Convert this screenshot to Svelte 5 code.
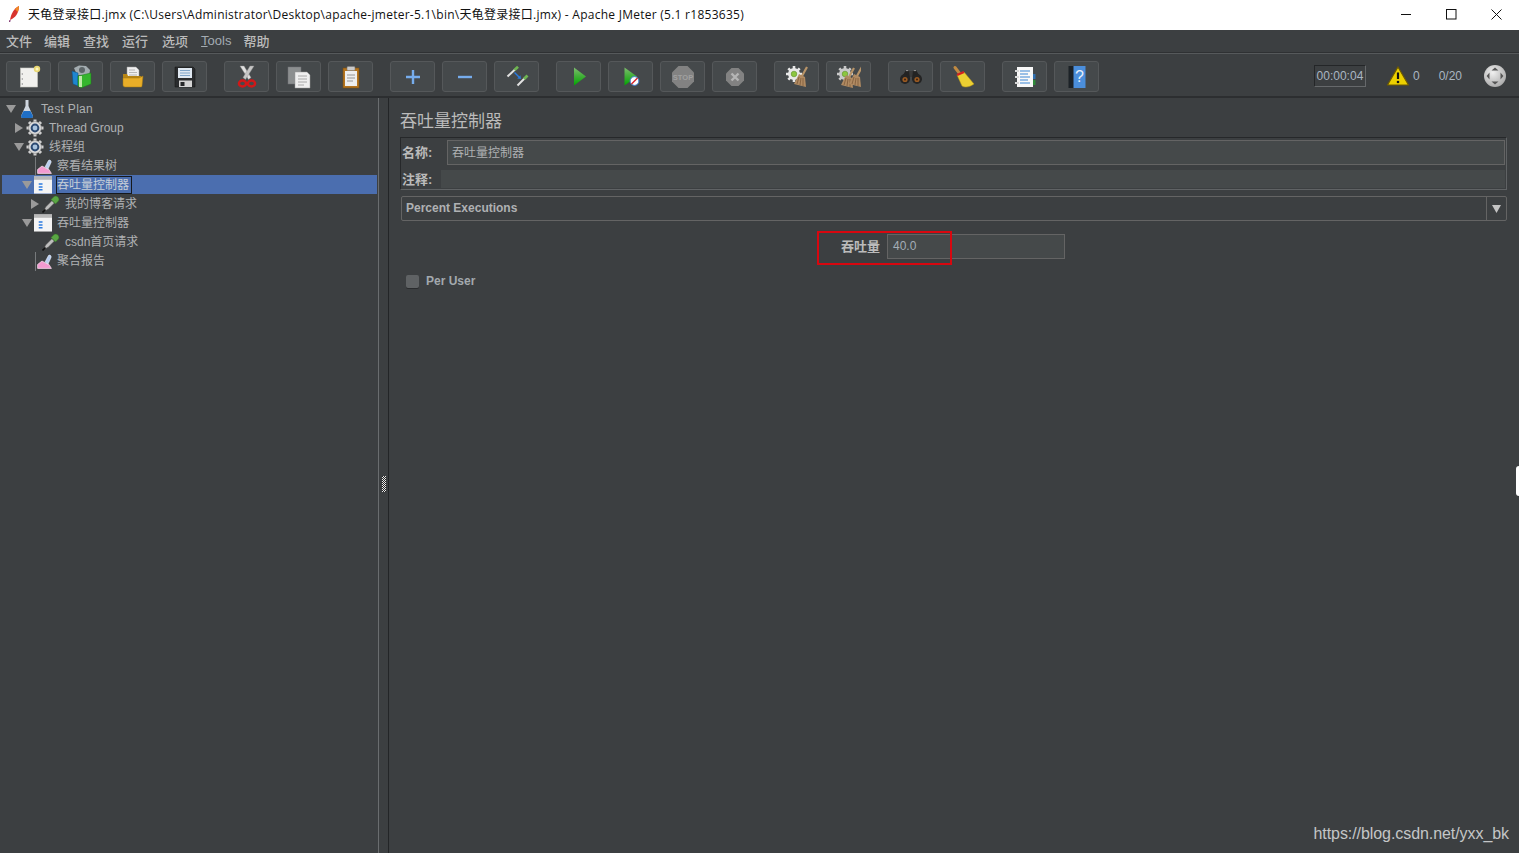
<script>
	const menus = [
		{ label: '文件' },
		{ label: '编辑' },
		{ label: '查找' },
		{ label: '运行' },
		{ label: '选项' },
		{ label: 'Tools', latin: true },
		{ label: '帮助' }
	];

	const treeRows = [
		{ level: 0, toggle: 'open', icon: 'flask', label: 'Test Plan', latin: true },
		{ level: 1, toggle: 'closed', icon: 'gear', label: 'Thread Group' },
		{ level: 1, toggle: 'open', icon: 'gear', label: '线程组' },
		{ level: 2, icon: 'chart', label: '察看结果树' },
		{ level: 2, toggle: 'open', icon: 'logic', label: '吞吐量控制器', selected: true },
		{ level: 3, toggle: 'closed', icon: 'pipette', label: '我的博客请求' },
		{ level: 2, toggle: 'open', icon: 'logic', label: '吞吐量控制器' },
		{ level: 3, icon: 'pipette', label: 'csdn首页请求' },
		{ level: 2, icon: 'chart', label: '聚合报告' }
	];
</script>

{#snippet broom(x, y, s = 1)}
	<g transform="translate({x} {y}) scale({s})">
		<path d="M14 0 L9 9" stroke="#b89468" stroke-width="2.2" />
		<path d="M6 7 L12 10 L13 20 L1 17 Z" fill="#b08a62" />
		<path d="M6 10 L4 17 M8 11 L7 18 M10 11 L10 19" stroke="#7d5a3a" stroke-width=".8" />
	</g>
{/snippet}

{#snippet smallGear(x, y, bright = '#e8e8e8')}
	<g transform="translate({x} {y})">
		<path d="M8 0v16M0 8h16M2.3 2.3l11.4 11.4M13.7 2.3L2.3 13.7" stroke={bright} stroke-width="2.6" />
		<circle cx="8" cy="8" r="6" fill={bright} />
		<circle cx="8" cy="8" r="2.8" fill="#8cc63f" stroke="#5d8f2a" stroke-width=".6" />
	</g>
{/snippet}

{#snippet newIcon()}
	<svg width="24" height="24" viewBox="0 0 24 24">
		<rect x="3.5" y="3" width="17" height="19" fill="#f1f1ee" stroke="#c8c8c4" stroke-width=".6" />
		<circle cx="5.3" cy="9" r=".7" fill="#888" />
		<circle cx="5.3" cy="14" r=".7" fill="#888" />
		<circle cx="5.3" cy="19" r=".7" fill="#888" />
		<circle cx="20" cy="4" r="3.2" fill="#e9d873" />
		<circle cx="20" cy="4" r="1.5" fill="#fff6bf" />
	</svg>
{/snippet}

{#snippet templatesIcon()}
	<svg width="24" height="24" viewBox="0 0 24 24">
		<path d="M5 3 L10 0.5 L17 1 L21 5 L20 12 L8 10 Z" fill="#a3acb0" />
		<circle cx="13" cy="5" r="3" fill="#5d6568" />
		<path d="M3 6 L9 8 V21 L4 19 Z" fill="#1f86d0" stroke="#0d4f80" stroke-width=".5" />
		<path d="M9 11 L22 8 V19 L12 23 L9 21 Z" fill="#35b52e" stroke="#1d7a1a" stroke-width=".5" />
		<path d="M10 11 h3 v11 h-3 Z" fill="#bfe9a8" />
	</svg>
{/snippet}

{#snippet openIcon()}
	<svg width="24" height="24" viewBox="0 0 24 24">
		<path d="M6 2 H15 L18 5 V14 H6 Z" fill="#efefef" stroke="#9a9a9a" stroke-width=".5" />
		<path d="M8 5h6M8 7.5h8M8 10h8" stroke="#a8a8a8" stroke-width=".8" />
		<path d="M2 9 H6 L7 11 H20 V13 H2 Z" fill="#b78514" />
		<path d="M2 13 H18 L22 11 L21 21 C21 22 20 22 19 22 H4 C3 22 2 21 2 20 Z" fill="#e9ae28" stroke="#a67a12" stroke-width=".5" />
	</svg>
{/snippet}

{#snippet saveIcon()}
	<svg width="24" height="24" viewBox="0 0 24 24">
		<path d="M2 2 H20 L22 4 V22 H2 Z" fill="#2a2c2e" stroke="#111" stroke-width=".5" />
		<rect x="5" y="3" width="14" height="10" fill="#dfe8f1" />
		<path d="M7 5.5h10M7 8h10M7 10.5h10" stroke="#7fa4c8" stroke-width="1" />
		<rect x="6" y="15.5" width="13" height="6.5" fill="#d4d4d4" />
		<rect x="7.5" y="17" width="4" height="4" fill="#26282a" />
	</svg>
{/snippet}

{#snippet cutIcon()}
	<svg width="24" height="24" viewBox="0 0 24 24">
		<path d="M5 1 L13.5 14.5 L16 12.6 L9 1 Z" fill="#e0e0e0" stroke="#8a8a8a" stroke-width=".4" />
		<path d="M19 1 L10.5 14.5 L8 12.6 L15 1 Z" fill="#c6c6c6" stroke="#8a8a8a" stroke-width=".4" />
		<ellipse cx="7.5" cy="18.5" rx="3.6" ry="3" fill="none" stroke="#d01818" stroke-width="2.4" />
		<ellipse cx="16.5" cy="18.5" rx="3.6" ry="3" fill="none" stroke="#d01818" stroke-width="2.4" />
	</svg>
{/snippet}

{#snippet copyIcon()}
	<svg width="24" height="24" viewBox="0 0 24 24">
		<rect x="1" y="2" width="13" height="17" fill="#8c8f90" stroke="#6f7273" stroke-width=".5" />
		<path d="M8 7 H20 L23 10 V23 H8 Z" fill="#efefef" stroke="#9a9a9a" stroke-width=".5" />
		<path d="M11 11h9M11 14h9M11 17h9M11 20h6" stroke="#a0a0a0" stroke-width=".9" />
	</svg>
{/snippet}

{#snippet pasteIcon()}
	<svg width="24" height="24" viewBox="0 0 24 24">
		<rect x="4" y="3" width="16" height="20" fill="#b4741e" stroke="#7a4e12" stroke-width=".6" />
		<rect x="6" y="6" width="12" height="15" fill="#eeeeee" />
		<path d="M8 10h8M8 13h8M8 16h6" stroke="#8a8a8a" stroke-width=".9" />
		<rect x="8" y="1.5" width="8" height="4" rx="1" fill="#c9c9c9" stroke="#777" stroke-width=".5" />
	</svg>
{/snippet}

{#snippet plusIcon()}
	<svg width="24" height="24" viewBox="0 0 24 24">
		<path d="M12 5 V19 M5 12 H19" stroke="#76acec" stroke-width="2.4" />
	</svg>
{/snippet}

{#snippet minusIcon()}
	<svg width="24" height="24" viewBox="0 0 24 24">
		<path d="M5 12 H19" stroke="#76acec" stroke-width="2.4" />
	</svg>
{/snippet}

{#snippet toggleIcon()}
	<svg width="24" height="24" viewBox="0 0 24 24">
		<path d="M2.5 11.5 L10 4.5" stroke="#e2e2e2" stroke-width="2" />
		<path d="M9.5 5 L13 1.8" stroke="#6fb552" stroke-width="2.8" />
		<path d="M12.5 20.5 L19.5 13.5" stroke="#e2e2e2" stroke-width="2" />
		<path d="M19 14 L22.5 10.6" stroke="#6fb552" stroke-width="2.8" />
		<path d="M9.5 7.5 L14 12" stroke="#2a7be0" stroke-width="1.4" />
		<path d="M16 14 L12.2 13.4 L15.4 10.2 Z" fill="#2a7be0" />
	</svg>
{/snippet}

{#snippet startIcon()}
	<svg width="24" height="24" viewBox="0 0 24 24">
		<defs>
			<linearGradient id="play" x1="0" y1="0" x2="0" y2="1">
				<stop offset="0" stop-color="#7dbd6e" />
				<stop offset=".5" stop-color="#3fae36" />
				<stop offset="1" stop-color="#00a800" />
			</linearGradient>
		</defs>
		<path d="M7 2.5 L19 11.5 L7 20.5 Z" fill="url(#play)" />
	</svg>
{/snippet}

{#snippet startNoPauseIcon()}
	<svg width="24" height="24" viewBox="0 0 24 24">
		<path d="M5.5 2.5 L18 11.5 L5.5 20.5 Z" fill="url(#play)" />
		<circle cx="15.5" cy="16" r="4.4" fill="#fff" stroke="#3a7bd0" stroke-width="1" />
		<path d="M12.5 19 L18.5 13" stroke="#d8242a" stroke-width="1.5" />
	</svg>
{/snippet}

{#snippet stopIcon()}
	<svg width="24" height="24" viewBox="0 0 24 24">
		<path d="M7.5 1 H16.5 L23 7.5 V16.5 L16.5 23 H7.5 L1 16.5 V7.5 Z" fill="#828282" />
		<text x="12" y="15" class="stop-text">STOP</text>
	</svg>
{/snippet}

{#snippet shutdownIcon()}
	<svg width="24" height="24" viewBox="0 0 24 24">
		<path d="M8.5 3 H15.5 L21 8.5 V15.5 L15.5 21 H8.5 L3 15.5 V8.5 Z" fill="#828282" />
		<path d="M8.5 8.5 L15.5 15.5 M15.5 8.5 L8.5 15.5" stroke="#b5b5b5" stroke-width="2.4" />
	</svg>
{/snippet}

{#snippet clearIcon()}
	<svg width="24" height="24" viewBox="0 0 24 24">
		{@render smallGear(1, 1)}
		{@render broom(8, 2)}
	</svg>
{/snippet}

{#snippet clearAllIcon()}
	<svg width="24" height="24" viewBox="0 0 24 24">
		{@render smallGear(0, 1, '#c9c9c9')}
		{@render broom(3, 3)}
		{@render broom(11, 2)}
	</svg>
{/snippet}

{#snippet searchIcon()}
	<svg width="24" height="24" viewBox="0 0 24 24">
		<rect x="9" y="6" width="6" height="6" fill="#3a3a3a" />
		<path d="M4 10 L7 5 H10 L11 15 H1 Z" fill="#232323" />
		<path d="M20 10 L17 5 H14 L13 15 H23 Z" fill="#232323" />
		<path d="M7 5.6h2.4M14.6 5.6h2.4" stroke="#9a9a9a" stroke-width="1" />
		<circle cx="6" cy="14" r="5" fill="#242424" />
		<circle cx="18" cy="14" r="5" fill="#242424" />
		<circle cx="6" cy="14.5" r="2.6" fill="#9a5a22" />
		<circle cx="18" cy="14.5" r="2.6" fill="#9a5a22" />
		<circle cx="6" cy="14.5" r="1" fill="#3a2210" />
		<circle cx="18" cy="14.5" r="1" fill="#3a2210" />
	</svg>
{/snippet}

{#snippet resetIcon()}
	<svg width="24" height="24" viewBox="0 0 24 24">
		<path d="M4 2.5 L9 9" stroke="#c08a42" stroke-width="3" stroke-linecap="round" />
		<path d="M6 10 L13 7 L23 19 C19 22 14 23 11 21 Z" fill="#eccf32" stroke="#b49414" stroke-width=".5" />
		<path d="M6 10 L13 7" stroke="#d32020" stroke-width="2.4" />
	</svg>
{/snippet}

{#snippet listIcon()}
	<svg width="24" height="24" viewBox="0 0 24 24">
		<rect x="4" y="2" width="16" height="20" fill="#f8f8f8" />
		<path d="M7 6h10M7 9h8M7 12h10M7 15h8M7 18h10" stroke="#3a86d4" stroke-width="1" />
		<path d="M2 6h4M2 12h4M2 18h4" stroke="#d8d8d8" stroke-width="2" />
		<rect x="20" y="9" width="2.5" height="5" fill="#2f6fb0" />
		<rect x="20" y="15" width="2.5" height="5" fill="#2f8a3a" />
	</svg>
{/snippet}

{#snippet helpIcon()}
	<svg width="24" height="24" viewBox="0 0 24 24">
		<rect x="3.5" y="1" width="6" height="22" fill="#1c2227" />
		<rect x="8.5" y="1" width="12" height="22" fill="#4b8edb" />
		<text x="14.5" y="17" class="help-text">?</text>
	</svg>
{/snippet}

{#snippet chartTree()}
	<svg class="chart-icon" width="15" height="15" viewBox="0 0 15 15">
		<path d="M.6 14.4 V10.5 L5 7 L8.5 9 L12 10.5 L14.4 14.4 Z" fill="#f39ad0" stroke="#fde6f4" stroke-width=".7" />
		<path d="M8 8 L11.5 1.5 C13 .4 14.6 1.8 14 3.6 L11 10 Z" fill="#b8cdf0" stroke="#f2f6ff" stroke-width=".6" />
	</svg>
{/snippet}

{#snippet gearTree()}
	<svg width="18" height="18" viewBox="0 0 18 18">
		<path d="M9 .5v17M.5 9h17M3 3l12 12M15 3L3 15" stroke="#cfcfcf" stroke-width="3" />
		<circle cx="9" cy="9" r="6.4" fill="#dedede" stroke="#777" stroke-width=".5" />
		<circle cx="9" cy="9" r="4.4" fill="#2c4a72" />
		<circle cx="9" cy="9" r="2.4" fill="#a9c3de" />
	</svg>
{/snippet}

{#snippet flaskTree()}
	<svg width="18" height="18" viewBox="0 0 18 18">
		<path d="M7.5 0 H10.5 V6 L15 16 C15 17.4 14 18 13 18 H5 C4 18 3 17.4 3 16 L7.5 6 Z" fill="#cfd6df" />
		<path d="M5.6 11 H12.4 L15 16 C15 17.4 14 18 13 18 H5 C4 18 3 17.4 3 16 Z" fill="#1f6fc6" />
	</svg>
{/snippet}

{#snippet logicTree()}
	<svg width="19" height="18" viewBox="0 0 19 18">
		<rect x="0" y="0" width="19" height="18" fill="#f4f4f4" />
		<rect x="0" y="0" width="19" height="3.5" fill="#b9b9b9" />
		<path d="M5 8h4M5 11h4M5 14h4" stroke="#2d7be0" stroke-width="1.6" />
	</svg>
{/snippet}

{#snippet pipetteTree()}
	<svg width="18" height="18" viewBox="0 0 18 18">
		<path d="M1.5 16.5 L3.5 12 L10 5.5 L12.5 8 L6 14.5 Z" fill="#bdbdbd" stroke="#3e3e3e" stroke-width=".6" />
		<path d="M.5 17.5 L3.5 14.5" stroke="#111" stroke-width="1.6" />
		<path d="M9 4.5 L13.5 9 L16.5 6 C18.4 3.4 14.8 -.4 12 1.5 Z" fill="#5aa644" stroke="#2c6a20" stroke-width=".5" />
	</svg>
{/snippet}

{#snippet toolbutton(icon)}
	<button class="tool" type="button">{@render icon()}</button>
{/snippet}

<div class="window">
	<header class="titlebar">
		<svg class="app-icon" width="12" height="18" viewBox="0 0 12 18">
			<path d="M1 15 C2 9 5 3 10 1 C10 6 8 11 3 14 Z" fill="#d8342e" />
			<path d="M6 4 C7 3 8 2 10 1 C10 3 9.6 5 8.6 7 Z" fill="#f08a24" />
			<path d="M1 15 L.6 17" stroke="#7a2a6a" stroke-width="1.2" />
		</svg>
		<span class="title">天龟登录接口.jmx (C:\Users\Administrator\Desktop\apache-jmeter-5.1\bin\天龟登录接口.jmx) - Apache JMeter (5.1 r1853635)</span>
		<div class="window-controls">
			<svg width="11" height="11" viewBox="0 0 11 11"><path d="M0 5.5H10" stroke="#111" stroke-width="1" /></svg>
			<svg width="11" height="11" viewBox="0 0 11 11"><rect x=".5" y=".5" width="9.5" height="9.5" fill="none" stroke="#111" /></svg>
			<svg width="11" height="11" viewBox="0 0 11 11"><path d="M.5 .5L10.5 10.5M10.5 .5L.5 10.5" stroke="#111" stroke-width="1" /></svg>
		</div>
	</header>

	<nav class="menubar">
		{#each menus as menu}
			{#if menu.latin}
				<span class="menu menu--latin"><u>T</u>ools</span>
			{:else}
				<span class="menu">{menu.label}</span>
			{/if}
		{/each}
	</nav>

	<div class="toolbar">
		<div class="tool-group">
			{@render toolbutton(newIcon)}
			{@render toolbutton(templatesIcon)}
			{@render toolbutton(openIcon)}
			{@render toolbutton(saveIcon)}
		</div>
		<div class="tool-group">
			{@render toolbutton(cutIcon)}
			{@render toolbutton(copyIcon)}
			{@render toolbutton(pasteIcon)}
		</div>
		<div class="tool-group">
			{@render toolbutton(plusIcon)}
			{@render toolbutton(minusIcon)}
			{@render toolbutton(toggleIcon)}
		</div>
		<div class="tool-group">
			{@render toolbutton(startIcon)}
			{@render toolbutton(startNoPauseIcon)}
			{@render toolbutton(stopIcon)}
			{@render toolbutton(shutdownIcon)}
		</div>
		<div class="tool-group">
			{@render toolbutton(clearIcon)}
			{@render toolbutton(clearAllIcon)}
		</div>
		<div class="tool-group">
			{@render toolbutton(searchIcon)}
			{@render toolbutton(resetIcon)}
		</div>
		<div class="tool-group">
			{@render toolbutton(listIcon)}
			{@render toolbutton(helpIcon)}
		</div>

		<div class="status">
			<span class="timer">00:00:04</span>
			<svg class="warn" width="22" height="20" viewBox="0 0 22 20">
				<path d="M11 1 L21.5 19 H.5 Z" fill="#ecd000" stroke="#6e5a00" stroke-width="1.2" />
				<path d="M11 6.5 V13" stroke="#111" stroke-width="2.2" />
				<circle cx="11" cy="16" r="1.3" fill="#111" />
			</svg>
			<span class="count">0</span>
			<span class="threads">0/20</span>
			<svg class="globe" width="22" height="22" viewBox="0 0 22 22">
				<defs>
					<radialGradient id="ball" cx=".4" cy=".35" r=".7">
						<stop offset="0" stop-color="#f0f0f0" />
						<stop offset="1" stop-color="#a8a8a8" />
					</radialGradient>
				</defs>
				<circle cx="11" cy="11" r="11" fill="url(#ball)" />
				<path d="M7.5 5.5 L11 2.6 L14.5 5.5 Z M7.5 16.5 L11 19.4 L14.5 16.5 Z M5.5 7.5 L2.6 11 L5.5 14.5 Z M16.5 7.5 L19.4 11 L16.5 14.5 Z" fill="#555" />
			</svg>
		</div>
	</div>

	<div class="split">
		<aside class="tree">
			{#each treeRows as row}
				<div class={['tree-row', row.selected && 'tree-row--selected']} style="padding-left: {3 + row.level * 8}px">
					<span class="toggle">
						{#if row.toggle === 'open'}
							<svg width="10" height="8" viewBox="0 0 10 8"><path d="M0 0H10L5 8Z" fill="#9a9a9a" /></svg>
						{:else if row.toggle === 'closed'}
							<svg width="8" height="10" viewBox="0 0 8 10"><path d="M0 0V10L8 5Z" fill="#9a9a9a" /></svg>
						{/if}
					</span>
					<span class="tree-icon">
						{#if row.icon === 'flask'}{@render flaskTree()}
						{:else if row.icon === 'gear'}{@render gearTree()}
						{:else if row.icon === 'chart'}
							<span class="branch"></span>
							{@render chartTree()}
						{:else if row.icon === 'logic'}{@render logicTree()}
						{:else}{@render pipetteTree()}
						{/if}
					</span>
					<span class={['tree-label', row.latin && 'tree-label--latin']}>{row.label}</span>
				</div>
			{/each}
		</aside>

		<div class="divider">
			<span class="grip"></span>
		</div>

		<main class="content">
			<h1 class="heading">吞吐量控制器</h1>

			<div class="name-panel">
				<div class="name-row">
					<span class="field-label">名称:</span>
					<span class="text-field text-field--name">吞吐量控制器</span>
				</div>
				<div class="comment-row">
					<span class="field-label">注释:</span>
					<span class="comment-field"></span>
				</div>
			</div>

			<div class="combo">
				<span class="combo-value">Percent Executions</span>
				<span class="combo-arrow">
					<svg width="9" height="8" viewBox="0 0 9 8"><path d="M0 0H9L4.5 8Z" fill="#c4c4c4" /></svg>
				</span>
			</div>

			<div class="throughput">
				<span class="throughput-label">吞吐量</span>
				<span class="text-field text-field--value">40.0</span>
				<span class="highlight"></span>
			</div>

			<label class="per-user">
				<span class="checkbox"></span>
				<span>Per User</span>
			</label>

			<span class="watermark">https://blog.csdn.net/yxx_bk</span>
		</main>
	</div>

	<span class="edge-tab"></span>
</div>

<style>
	:global(body) {
		margin: 0;
		overflow: hidden;
		background: #3c3f41;
	}

	.window {
		position: relative;
		display: flex;
		flex-direction: column;
		height: 853px;
		overflow: hidden;
		background: #3c3f41;
		color: #bbbbbb;
		font-family: 'Liberation Sans', 'Noto Sans CJK SC', sans-serif;
		font-size: 12px;
	}

	.titlebar {
		display: flex;
		align-items: center;
		flex: none;
		height: 30px;
		padding: 0 0 2px 9px;
		box-sizing: border-box;
		background: #fff;
		color: #111;
		font-family: 'Open Sans', 'Noto Sans CJK SC', sans-serif;
		font-size: 12px;
	}

	.title {
		letter-spacing: 0.26px;
	}

	.app-icon {
		margin-right: 7px;
	}

	.window-controls {
		display: flex;
		gap: 34px;
		margin-left: auto;
		margin-right: 17px;
	}

	.menubar {
		display: flex;
		align-items: center;
		gap: 13px;
		flex: none;
		height: 23px;
		padding: 0 0 2px 6px;
		box-sizing: border-box;
		font-size: 13px;
		border-bottom: 1px solid #2f3133;
		box-shadow: 0 1px 0 #56595b;
	}

	.menu {
		font-weight: 500;
	}

	.menu:first-child {
		margin-right: -1px;
	}

	.menu:nth-child(4) {
		margin-right: 1px;
	}

	.menu--latin {
		font-weight: 400;
		color: #a3abb2;
		margin-right: -1px;
	}

	.toolbar {
		display: flex;
		align-items: center;
		gap: 17px;
		flex: none;
		height: 45px;
		padding: 4px 0 0 6px;
		box-sizing: border-box;
		border-bottom: 2px solid #2c2e30;
	}

	.tool-group {
		display: flex;
		gap: 7px;
	}

	.tool {
		display: flex;
		align-items: center;
		justify-content: center;
		width: 45px;
		height: 31px;
		padding: 0;
		box-sizing: border-box;
		background: #45494b;
		border: 1px solid #55585a;
		border-radius: 3px;
	}

	.stop-text {
		fill: #a0a0a0;
		font-size: 7.5px;
		font-weight: 700;
		text-anchor: middle;
	}

	.help-text {
		fill: #e8f0fa;
		font-size: 16px;
		text-anchor: middle;
	}

	.status {
		display: flex;
		align-items: center;
		margin: -2px 13px 0 auto;
	}

	.timer {
		box-sizing: border-box;
		width: 52px;
		height: 22px;
		line-height: 20px;
		text-align: center;
		color: #aab6c2;
		border: 1px solid;
		border-color: #242628 #66696b #66696b #242628;
	}

	.warn {
		margin-left: 21px;
	}

	.count {
		margin-left: 4px;
		color: #aab6c2;
	}

	.threads {
		margin-left: 19px;
		color: #aab6c2;
	}

	.globe {
		margin-left: 22px;
	}

	.split {
		display: flex;
		flex: 1;
		min-height: 0;
	}

	.tree {
		flex: none;
		width: 375px;
		padding: 1px 1px 0 2px;
		border-right: 1px solid #6a6d6f;
		color: #afb1b3;
		font-size: 12px;
	}

	.tree-row {
		display: flex;
		align-items: center;
		height: 19px;
		box-sizing: border-box;
	}

	.tree-row--selected {
		background: #4b6eaf;
		color: #c6ced8;
	}

	.toggle {
		display: flex;
		align-items: center;
		justify-content: center;
		width: 12px;
		margin-right: 1px;
	}

	.tree-icon {
		position: relative;
		display: flex;
		align-items: center;
		justify-content: center;
		width: 18px;
		margin-right: 5px;
	}

	.chart-icon {
		margin: 2px 0 0 2px;
	}

	.branch {
		position: absolute;
		left: 1px;
		top: 0;
		width: 1px;
		height: 19px;
		background: #777a7c;
	}

	.tree-label {
		margin-left: -1px;
		padding-right: 2px;
		line-height: 16px;
		border: 1px solid transparent;
	}

	.tree-label--latin {
		letter-spacing: 0.3px;
	}

	.tree-row--selected .tree-label {
		border-color: #16191d;
	}

	.divider {
		position: relative;
		flex: none;
		width: 9px;
		border-right: 1px solid #232527;
	}

	.grip {
		position: absolute;
		left: 3px;
		top: 378px;
		width: 4px;
		height: 16px;
		background: repeating-conic-gradient(#e8e8e8 0 25%, #222 0 50%) 0 0 / 2px 2px;
	}

	.content {
		position: relative;
		flex: 1;
		min-width: 0;
		padding: 12px 12px 0 11px;
	}

	.heading {
		margin: 0 0 3px;
		font-size: 17px;
		line-height: 24px;
		font-weight: 400;
		color: #bbbbbb;
	}

	.name-panel {
		box-sizing: border-box;
		height: 53px;
		padding: 2px 1px 1px 1px;
		border: 1px solid;
		border-color: #26282a #606365 #606365 #26282a;
	}

	.name-row {
		display: flex;
		align-items: center;
		height: 25px;
	}

	.field-label {
		flex: none;
		width: 45px;
		margin-top: -2px;
		font-size: 13px;
		font-weight: 700;
	}

	.text-field {
		display: flex;
		align-items: center;
		box-sizing: border-box;
		height: 25px;
		padding-bottom: 2px;
		background: #45494a;
		border: 1px solid #646464;
	}

	.text-field--name {
		flex: 1;
		padding-left: 4px;
		font-size: 12px;
		color: #afb1b3;
	}

	.comment-row {
		display: flex;
		align-items: center;
		height: 18px;
		margin-top: 5px;
	}

	.comment-row .field-label {
		width: 39px;
	}

	.comment-field {
		flex: 1;
		height: 18px;
		background: #45494a;
	}

	.combo {
		display: flex;
		box-sizing: border-box;
		height: 25px;
		margin: 6px 0 0 1px;
		border: 1px solid #646464;
		border-radius: 2px;
	}

	.combo-value {
		flex: 1;
		padding-left: 4px;
		line-height: 22px;
		font-weight: 700;
		color: #afb1b3;
	}

	.combo-arrow {
		display: flex;
		align-items: center;
		justify-content: center;
		width: 19px;
		border-left: 1px solid #646464;
	}

	.throughput {
		position: relative;
		display: flex;
		align-items: center;
		margin: 13px 0 0 441px;
	}

	.throughput-label {
		width: 46px;
		margin-top: -2px;
		font-size: 13px;
		font-weight: 700;
	}

	.text-field--value {
		width: 178px;
		padding-left: 5px;
		color: #a3adb6;
	}

	.highlight {
		position: absolute;
		left: -24px;
		top: -3px;
		width: 135px;
		height: 34px;
		box-sizing: border-box;
		border: 2px solid #d8070f;
	}

	.per-user {
		display: flex;
		align-items: center;
		gap: 7px;
		margin: 15px 0 0 6px;
		font-weight: 700;
		color: #a3a9ae;
	}

	.checkbox {
		width: 13px;
		height: 13px;
		background: #5f6264;
		border-radius: 2px;
		box-shadow: 0 1px 0 #2a2c2e;
	}

	.watermark {
		position: absolute;
		right: 10px;
		bottom: 10px;
		font-size: 16px;
		letter-spacing: -0.07px;
		color: #c4c6c7;
	}

	.edge-tab {
		position: absolute;
		right: 0;
		top: 466px;
		width: 3px;
		height: 30px;
		background: #fff;
		border-radius: 3px 0 0 3px;
	}
</style>
